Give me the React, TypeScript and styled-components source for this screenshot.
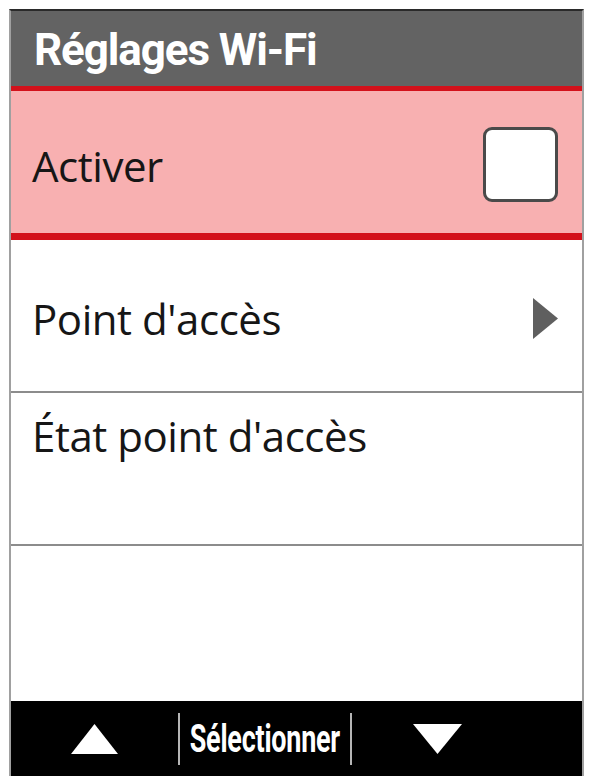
import styled, {createGlobalStyle} from "styled-components";

const GlobalStyle = createGlobalStyle`
    html, body {
        margin: 0;
        padding: 0;
        background: #ffffff;
    }
    body {
        font-family: "Open Sans", "Noto Sans", sans-serif;
    }
`

export default function App() {
    return <>
        <GlobalStyle/>
        <Screen>
            <Header>Réglages Wi-Fi</Header>
            <ActiveRow>
                <Label>Activer</Label>
                <CheckBox/>
            </ActiveRow>
            <Row>
                <Label>Point d'accès</Label>
                <svg width="25" height="41" viewBox="0 0 25 41">
                    <polygon points="0,0 25,20.5 0,41" fill="#5f5f5f"/>
                </svg>
            </Row>
            <Row $top>
                <Label>État point d'accès</Label>
            </Row>
            <EmptyRow/>
            <Footer>
                <FooterCell>
                    <svg width="47" height="30" viewBox="0 0 47 30">
                        <polygon points="23.5,0 47,30 0,30" fill="#ffffff"/>
                    </svg>
                </FooterCell>
                <FooterCell $divided>
                    <SoftKey>Sélectionner</SoftKey>
                </FooterCell>
                <FooterCell>
                    <svg width="49" height="30" viewBox="0 0 49 30">
                        <polygon points="0,0 49,0 24.5,30" fill="#ffffff"/>
                    </svg>
                </FooterCell>
                <div/>
            </Footer>
        </Screen>
    </>
}

const Screen = styled.div`
    margin: 9px 0 0 9px;
    width: 575px;
    box-sizing: border-box;
    border-top: 2px solid #2a2a2a;
    border-left: 2px solid #a0a0a0;
    border-right: 2px solid #a0a0a0;
    display: flex;
    flex-direction: column;
`

const Header = styled.div`
    height: 75px;
    background: #636363;
    color: #ffffff;
    font-family: Roboto, "Noto Sans", sans-serif;
    font-weight: 700;
    font-size: 44px;
    letter-spacing: -1.1px;
    display: flex;
    align-items: center;
    padding-left: 23px;
    padding-top: 2px;
    box-sizing: border-box;
`

const Label = styled.span`
    font-size: 42px;
    line-height: 50px;
    letter-spacing: -0.45px;
    color: #161616;
`

const ActiveRow = styled.div`
    height: 154px;
    box-sizing: border-box;
    background: #f8b0b1;
    border-top: 5px solid #d3111b;
    border-bottom: 7px solid #d3111b;
    display: flex;
    align-items: center;
    justify-content: space-between;
    padding: 4px 24px 0 21px;

    ${Label} {
        padding-top: 4px;
    }
`

const CheckBox = styled.div`
    width: 75px;
    height: 75px;
    box-sizing: border-box;
    background: #ffffff;
    border: 3px solid #4a4a4a;
    border-radius: 9px;
`

const Row = styled.div<{ $top?: boolean }>`
    height: 153px;
    box-sizing: border-box;
    border-bottom: 2px solid #8c8c8c;
    display: flex;
    align-items: ${p => p.$top ? "flex-start" : "center"};
    justify-content: space-between;
    padding: ${p => p.$top ? "18px 24px 0 21px" : "6px 24px 0 21px"};
`

const EmptyRow = styled.div`
    height: 155px;
`

const Footer = styled.div`
    height: 75px;
    background: #000000;
    display: grid;
    grid-template-columns: 167px 174px 170px 1fr;
    align-items: center;
`

const FooterCell = styled.div<{ $divided?: boolean }>`
    display: flex;
    align-items: center;
    justify-content: center;
    height: 52px;
    padding-top: 1px;
    box-sizing: border-box;
    ${p => p.$divided && `
        border-left: 2px solid #b5b5b5;
        border-right: 2px solid #b5b5b5;
    `}
`

const SoftKey = styled.span`
    display: inline-block;
    flex: 0 0 auto;
    color: #ffffff;
    font-family: Roboto, "Noto Sans", sans-serif;
    font-weight: 700;
    font-size: 39px;
    transform: scaleX(0.69);
    letter-spacing: -0.3px;
`
